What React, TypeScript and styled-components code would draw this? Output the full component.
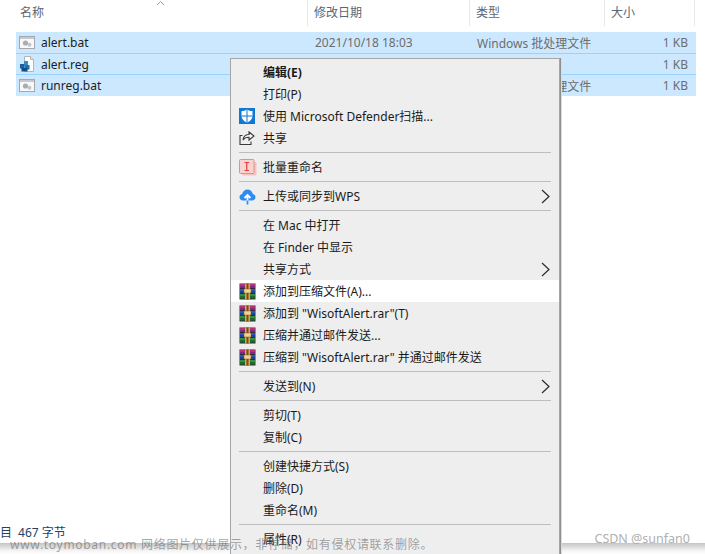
import React from "react";
import styled, { createGlobalStyle } from "styled-components";

const Global = createGlobalStyle`
  html, body { margin: 0; padding: 0; background: #fff; }
  body { font-family: "Noto Sans", "Noto Sans CJK SC", sans-serif; font-size: 12px; }
`;

const Page = styled.div`
  position: relative;
  width: 705px;
  height: 554px;
  overflow: hidden;
  display: flex;
  flex-direction: column;
  background: #fff;
`;

const Header = styled.div`
  position: relative;
  display: grid;
  grid-template-columns: 308px 162px 135px 90px;
  height: 26px;
  margin-bottom: 6px;
`;

const HeadCell = styled.div`
  display: flex;
  align-items: center;
  padding-left: ${p => p.$pad ?? 6}px;
  border-right: 1px solid #e8e8e8;
  color: #5a6673;
  font-size: 12px;
  line-height: 26px;
`;

const SortCaret = styled.svg`
  position: absolute;
  left: 156px;
  top: 0;
`;

const FileList = styled.div`
  margin-left: 16px;
  width: 680px;
  display: flex;
  flex-direction: column;
`;

const FileRow = styled.div`
  display: grid;
  grid-template-columns: 292px 162px 135px 83px;
  align-items: center;
  box-sizing: border-box;
  height: 21px;
  background: #cce8ff;
  border-bottom: 1px solid #99d1ff;
  &:first-child { height: 22px; }
  &:last-child { border-bottom: none; }
`;

const NameCell = styled.div`
  display: flex;
  align-items: center;
  gap: 6px;
  padding-left: 3px;
  color: #1c1c1c;
`;

const MetaCell = styled.div`
  padding-left: 7px;
  color: #6d6d6d;
  white-space: nowrap;
`;

const SizeCell = styled.div`
  text-align: right;
  color: #6d6d6d;
`;

const StatusBar = styled.div`
  margin-top: auto;
  height: 34px;
  box-sizing: border-box;
  padding-top: 4px;
  display: flex;
  gap: 7px;
  color: #27405f;
  font-size: 12px;
  line-height: 18px;
  white-space: nowrap;
`;

const StatusEnd = styled.span`
  margin-left: -1px;
`;

const FadeBand = styled.div`
  position: absolute;
  left: 0;
  right: 0;
  bottom: 0;
  height: 11px;
  background: linear-gradient(#c4c4c4, #f4f4f4 70%, #fff);
`;

const Menu = styled.div`
  position: absolute;
  left: 230px;
  top: 58px;
  width: 328px;
  height: 500px;
  padding-top: 2px;
  background: #eeeeee;
  border: 1px solid #a6a6a6;
  box-shadow: 1px 0 0 #8f8f8f, 2px 1px 0 #dcdcdc;
`;

const MenuItem = styled.div`
  position: relative;
  height: 22px;
  display: flex;
  align-items: center;
  background: ${p => (p.$active ? "#fff" : "transparent")};
  color: #1a1a1a;
  font-weight: ${p => (p.$bold ? 700 : 400)};
  white-space: nowrap;
`;

const IconSlot = styled.span`
  width: 32px;
  padding-left: 8px;
  box-sizing: border-box;
  display: flex;
  align-items: center;
`;

const Sub = styled.svg`
  position: absolute;
  left: 310px;
  top: 4px;
`;

const Separator = styled.div`
  height: 1px;
  margin: 3px 8px 3px 8px;
  background: #bdbdbd;
`;

const Watermark = styled.div`
  position: absolute;
  left: 10px;
  top: 536px;
  color: rgba(90, 90, 90, 0.55);
  font-size: 12px;
  line-height: 18px;
  letter-spacing: 0.7px;
  white-space: nowrap;
`;

const Credit = styled.div`
  position: absolute;
  right: 15px;
  top: 530px;
  color: #b0b0b0;
  font-size: 12.5px;
  line-height: 18px;
  white-space: nowrap;
`;

const BatIcon = () => (
  <svg width="16" height="14" viewBox="0 0 16 14">
    <rect x="0.5" y="0.5" width="15" height="12" fill="#f8f8f8" stroke="#a4a8ad" />
    <rect x="1" y="1" width="14" height="2" fill="#c6cacf" />
    <circle cx="6.5" cy="7" r="2.6" fill="#a8adb3" />
    <circle cx="10.5" cy="8.8" r="2" fill="#c2c6ca" />
  </svg>
);

const RegIcon = () => (
  <svg width="16" height="16" viewBox="0 0 16 16">
    <path d="M5.5.5h6l3 3v12h-9z" fill="#fff" stroke="#b5b5b5" />
    <path d="M11.5.5v3h3" fill="#e8e8e8" stroke="#b5b5b5" />
    <rect x="5" y="5" width="4" height="4" fill="#2a8fd6" />
    <rect x="1" y="8" width="4.5" height="4.5" fill="#17609f" />
    <rect x="6" y="9" width="4.5" height="4.5" fill="#1a6fb4" />
    <rect x="2.5" y="12" width="6" height="3.5" fill="#0f4d85" />
  </svg>
);

const ShieldIcon = () => (
  <svg width="16" height="16" viewBox="0 0 16 16">
    <rect width="16" height="16" fill="#0f78d4" />
    <path d="M8 1.500c1.800 1.100 3.600 1.500 5.500 1.600v4.800c0 3.200-2.400 5.300-5.500 6.600-3.100-1.300-5.500-3.400-5.500-6.600V3.100c1.900-.1 3.700-.5 5.500-1.600z" fill="#fff" />
    <path d="M8 1.500v13M2.500 8h11" stroke="#0f78d4" strokeWidth="1" />
  </svg>
);

const ShareIcon = () => (
  <svg width="16" height="16" viewBox="0 0 16 16" fill="none" stroke="#3a3a3a" strokeWidth="1.100">
    <path d="M3.500 5.500H1v9h11v-3" />
    <path d="M10 2v2.500C7 4.500 4.500 6.500 4 10c1.500-2 3.500-2.800 6-2.700V10l5-4z" fill="#f4f4f4" />
  </svg>
);

const RenameIcon = () => (
  <svg width="18" height="17" viewBox="0 0 18 17">
    <rect x="3" y="3" width="14.500" height="13.500" rx="1" fill="#f3c4c0" />
    <rect x="0.500" y="0.500" width="14.500" height="14" rx="1" fill="#f8d5d2" stroke="#e58f8a" />
    <path d="M5.500 3.500h4.500M5.500 11.500h4.500M7.750 3.500v8" stroke="#e2403a" strokeWidth="1.200" fill="none" />
  </svg>
);

const CloudIcon = () => (
  <svg width="17" height="17" viewBox="0 0 17 17">
    <path d="M4 12.500C1.800 12.500.500 11 .500 9.300c0-1.600 1.100-2.900 2.700-3.200C3.700 3.300 5.900 1.500 8.500 1.500s4.800 1.800 5.300 4.600c1.600.3 2.700 1.600 2.700 3.200 0 1.700-1.300 3.200-3.500 3.200z" fill="#2f8bf0" />
    <path d="M8.500 16V7.500M5.500 10l3-3 3 3" stroke="#fff" strokeWidth="1.800" fill="none" />
    <path d="M8.500 12.500V16.500" stroke="#2f8bf0" strokeWidth="1.800" />
  </svg>
);

const RarIcon = () => (
  <svg width="17" height="17" viewBox="0 0 17 17">
    <rect x="0.500" y="0.500" width="16" height="16" fill="#33283c" />
    <rect x="1" y="1" width="15" height="2" fill="#b8326f" />
    <rect x="1" y="3" width="15" height="2" fill="#7d2a80" />
    <rect x="1" y="6" width="15" height="2" fill="#3258ad" />
    <rect x="1" y="8" width="15" height="2" fill="#1f3f8f" />
    <rect x="1" y="11" width="15" height="2" fill="#348f38" />
    <rect x="1" y="13" width="15" height="2.500" fill="#1d6c29" />
    <rect x="6" y="0.500" width="5" height="16" fill="#dca650" />
    <rect x="7.500" y="0.500" width="2" height="16" fill="#7a4a1c" />
    <rect x="5" y="6" width="7" height="4" fill="#ecd49a" stroke="#8a5a20" strokeWidth="0.500" />
  </svg>
);

const Chevron = () => (
  <Sub width="9" height="15" viewBox="0 0 9 15" fill="none" stroke="#2b2b2b" strokeWidth="1.200">
    <path d="M1 1l7 6.500L1 14" />
  </Sub>
);

type Entry =
  | { sep: true }
  | { label: string; icon?: React.ReactNode; bold?: boolean; active?: boolean; sub?: boolean; sep?: false };

const entries: Entry[] = [
  { label: "编辑(E)", bold: true },
  { label: "打印(P)" },
  { label: "使用 Microsoft Defender扫描...", icon: <ShieldIcon /> },
  { label: "共享", icon: <ShareIcon /> },
  { sep: true },
  { label: "批量重命名", icon: <RenameIcon /> },
  { sep: true },
  { label: "上传或同步到WPS", icon: <CloudIcon />, sub: true },
  { sep: true },
  { label: "在 Mac 中打开" },
  { label: "在 Finder 中显示" },
  { label: "共享方式", sub: true },
  { label: "添加到压缩文件(A)...", icon: <RarIcon />, active: true },
  { label: '添加到 "WisoftAlert.rar"(T)', icon: <RarIcon /> },
  { label: "压缩并通过邮件发送...", icon: <RarIcon /> },
  { label: '压缩到 "WisoftAlert.rar" 并通过邮件发送', icon: <RarIcon /> },
  { sep: true },
  { label: "发送到(N)", sub: true },
  { sep: true },
  { label: "剪切(T)" },
  { label: "复制(C)" },
  { sep: true },
  { label: "创建快捷方式(S)" },
  { label: "删除(D)" },
  { label: "重命名(M)" },
  { sep: true },
  { label: "属性(R)" },
];

const files = [
  { name: "alert.bat", icon: <BatIcon />, date: "2021/10/18 18:03", type: "Windows 批处理文件" },
  { name: "alert.reg", icon: <RegIcon />, date: "", type: "" },
  { name: "runreg.bat", icon: <BatIcon />, date: "", type: "Windows 批处理文件" },
];

export default function App() {
  return (
    <Page>
      <Global />
      <Header>
        <HeadCell $pad={20}>名称</HeadCell>
        <HeadCell>修改日期</HeadCell>
        <HeadCell>类型</HeadCell>
        <HeadCell>大小</HeadCell>
        <SortCaret width="9" height="6" viewBox="0 0 9 6" fill="none" stroke="#9a9a9a">
          <path d="M1 5l3.500-3.500L8 5" />
        </SortCaret>
      </Header>
      <FileList>
        {files.map(f => (
          <FileRow key={f.name}>
            <NameCell>
              {f.icon}
              {f.name}
            </NameCell>
            <MetaCell>{f.date}</MetaCell>
            <MetaCell>{f.type}</MetaCell>
            <SizeCell>1 KB</SizeCell>
          </FileRow>
        ))}
      </FileList>
      <StatusBar>
        <span>目</span>
        <StatusEnd>467 字节</StatusEnd>
      </StatusBar>
      <FadeBand />
      <Menu>
        {entries.map((e, i) =>
          e.sep ? (
            <Separator key={i} />
          ) : (
            <MenuItem key={i} $bold={e.bold} $active={e.active}>
              <IconSlot>{e.icon}</IconSlot>
              {e.label}
              {e.sub && <Chevron />}
            </MenuItem>
          )
        )}
      </Menu>
      <Watermark>www.toymoban.com 网络图片仅供展示，非存储，如有侵权请联系删除。</Watermark>
      <Credit>CSDN @sunfan0</Credit>
    </Page>
  );
}
